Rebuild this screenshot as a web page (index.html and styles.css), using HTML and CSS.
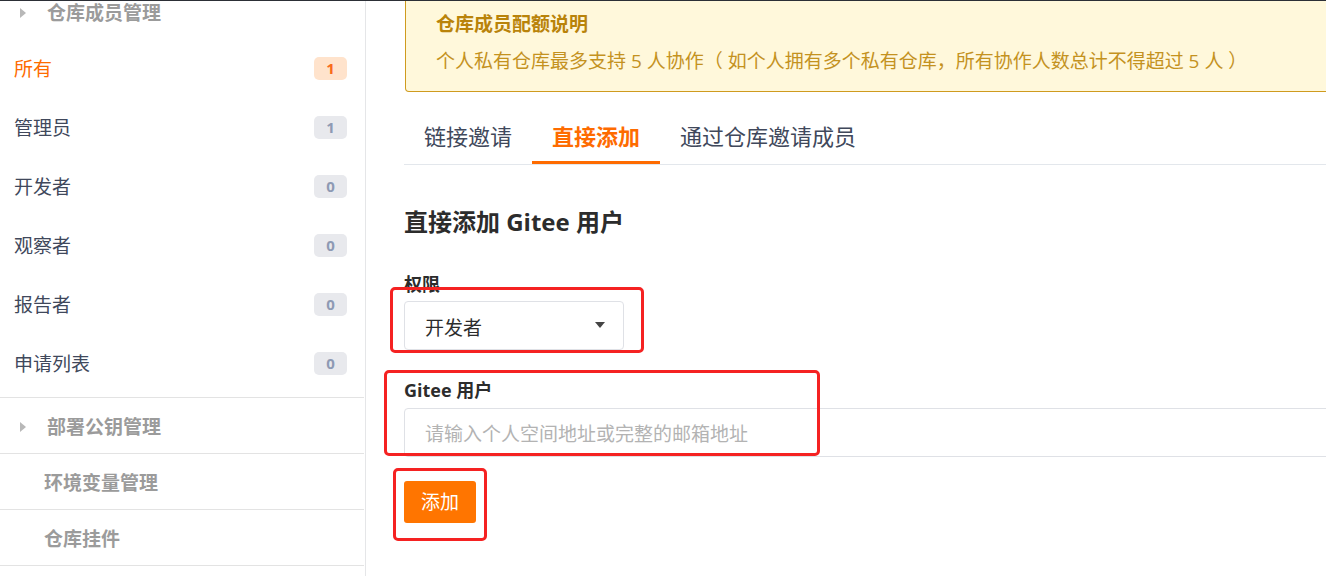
FILE: index.html
```html
<!DOCTYPE html>
<html lang="zh-CN">
<head>
<meta charset="utf-8">
<title>仓库成员管理</title>
<link rel="stylesheet" href="styles.css">
</head>
<body>
<div class="topline"></div>
<div class="page">
  <aside class="sidebar">
    <div class="group-head"><span class="tri"></span><span>仓库成员管理</span></div>
    <ul class="sub-list">
      <li class="sub-item active"><span>所有</span><span class="badge badge-active">1</span></li>
      <li class="sub-item"><span>管理员</span><span class="badge">1</span></li>
      <li class="sub-item"><span>开发者</span><span class="badge">0</span></li>
      <li class="sub-item"><span>观察者</span><span class="badge">0</span></li>
      <li class="sub-item"><span>报告者</span><span class="badge">0</span></li>
      <li class="sub-item"><span>申请列表</span><span class="badge">0</span></li>
    </ul>
    <div class="menu-row with-tri"><span class="tri"></span><span>部署公钥管理</span></div>
    <div class="menu-row">环境变量管理</div>
    <div class="menu-row">仓库挂件</div>
  </aside>
  <main class="main">
    <div class="notice">
      <div class="notice-title">仓库成员配额说明</div>
      <div class="notice-body">个人私有仓库最多支持 5 人协作（ 如个人拥有多个私有仓库，所有协作人数总计不得超过 5 人 ）</div>
    </div>
    <nav class="tabs">
      <span class="tab">链接邀请</span>
      <span class="tab tab-active">直接添加</span>
      <span class="tab">通过仓库邀请成员</span>
    </nav>
    <h2 class="form-title">直接添加 Gitee 用户</h2>
    <div class="field">
      <label class="field-label">权限</label>
      <div class="select"><span>开发者</span><span class="caret"></span></div>
    </div>
    <div class="field field-user">
      <label class="field-label">Gitee 用户</label>
      <div class="input"><span class="placeholder">请输入个人空间地址或完整的邮箱地址</span></div>
    </div>
    <button class="btn-add" type="button">添加</button>
    <div class="mark mark-1"></div>
    <div class="mark mark-2"></div>
    <div class="mark mark-3"></div>
  </main>
</div>
</body>
</html>
```

FILE: styles.css
```css
* { box-sizing: border-box; }
html, body {
  margin: 0;
  padding: 0;
  background: #fff;
  overflow: hidden;
  height: 576px;
}
body {
  font-family: "Open Sans", "Noto Sans CJK SC", sans-serif;
  font-size: 19px;
  color: #40485b;
}
.topline {
  height: 1px;
  background: #2c2f36;
}
.page {
  display: flex;
  width: 1500px;
  height: 575px;
  overflow: hidden;
}
.sidebar {
  width: 366px;
  flex: none;
  border-right: 1px solid #e5e6e8;
  margin-top: -15px;
  height: 600px;
}
.group-head {
  height: 53px;
  display: flex;
  align-items: center;
  padding-left: 20px;
  font-weight: bold;
  color: #9b9b9b;
  line-height: 28px;
}
.tri {
  width: 0;
  height: 0;
  border-top: 5px solid transparent;
  border-bottom: 5px solid transparent;
  border-left: 6px solid #b8b8b8;
  margin-right: 21px;
}
.sub-list {
  list-style: none;
  margin: 0 1px 0 0;
  padding: 0 17px 4px 14px;
  border-bottom: 1px solid #e3e3e3;
}
.sub-item {
  height: 59px;
  display: flex;
  align-items: center;
  justify-content: space-between;
  line-height: 28px;
  color: #40485b;
}
.sub-item.active { color: #fe6b00; }
.badge {
  width: 33px;
  height: 23px;
  border-radius: 5px;
  background: #e8e9ed;
  color: #8e9ab4;
  font-weight: bold;
  font-size: 15px;
  display: flex;
  align-items: center;
  justify-content: center;
  line-height: 1;
}
.badge-active {
  background: #ffe3cc;
  color: #f96b1b;
}
.menu-row {
  height: 56px;
  display: flex;
  align-items: center;
  padding-left: 44px;
  padding-top: 3px;
  font-weight: bold;
  color: #9b9b9b;
  border-bottom: 1px solid #e3e3e3;
  margin-right: 1px;
  line-height: 28px;
}
.menu-row.with-tri { padding-left: 20px; }
.main {
  position: relative;
  flex: 1;
  padding-left: 38px;
}
.notice {
  background: #fff8db;
  border: 1px solid #cf9b1e;
  border-top: 0;
  border-radius: 0 0 4px 4px;
  padding: 9px 30px 16px;
  margin-left: 1px;
}
.notice-title {
  font-weight: bold;
  color: #b9830a;
  line-height: 28px;
}
.notice-body {
  margin-top: 9px;
  color: #c4921f;
  line-height: 28px;
}
.tabs {
  margin-top: 20px;
  display: flex;
  border-bottom: 1px solid #e3e7ec;
  height: 53px;
}
.tab {
  height: 52px;
  padding: 0 20px;
  font-size: 22px;
  line-height: 49px;
  border-bottom: 3px solid transparent;
  color: #40485b;
}
.tab-active {
  color: #fe6b00;
  font-weight: bold;
  border-bottom-color: #fe6b00;
}
.form-title {
  margin: 41px 0 0;
  font-size: 24px;
  line-height: 32px;
  font-weight: bold;
  color: #2c2c2c;
}
.field { margin-top: 34px; }
.field-user { margin-top: 28px; }
.field-label {
  display: block;
  font-weight: bold;
  font-size: 18px;
  line-height: 24px;
  color: #2c2c2c;
}
.select {
  margin-top: 5px;
  width: 220px;
  height: 49px;
  border: 1px solid #dfe1e6;
  border-radius: 4px;
  display: flex;
  align-items: center;
  justify-content: space-between;
  padding: 5px 18px 0 20px;
  color: #2c2c2c;
  line-height: 28px;
}
.caret {
  width: 0;
  height: 0;
  border-left: 5px solid transparent;
  border-right: 5px solid transparent;
  border-top: 6px solid #454545;
  margin-top: -6px;
}
.field-user .field-label { margin-bottom: 6px; }
.input {
  width: 1000px;
  height: 49px;
  border: 1px solid #dfe1e6;
  border-radius: 4px;
  display: flex;
  align-items: center;
  padding: 2px 0 0 20px;
  line-height: 28px;
}
.placeholder { color: #b3b3b3; }
.btn-add {
  display: block;
  margin-top: 24px;
  width: 72px;
  height: 42px;
  border: 0;
  border-radius: 3px;
  background: #ff7500;
  color: #fff;
  font-family: "Open Sans", "Noto Sans CJK SC", sans-serif;
  font-size: 19px;
  line-height: 28px;
  padding: 0;
}
.mark {
  position: absolute;
  border: 3px solid #f52222;
  border-radius: 5px;
}
.mark-1 { left: 24px; top: 286px; width: 254px; height: 66px; }
.mark-2 { left: 18px; top: 369px; width: 436px; height: 86px; }
.mark-3 { left: 27px; top: 467px; width: 94px; height: 73px; }
```
